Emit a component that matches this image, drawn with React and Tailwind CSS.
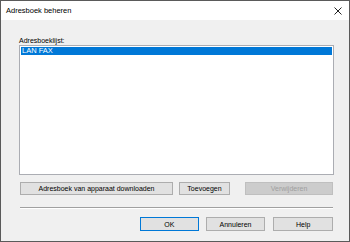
export default function App() {
  const btn =
    "flex items-center justify-center border border-[#adadad] bg-[#e1e1e1] text-black";
  return (
    <div
      className="w-[350px] h-[242px] border border-[#5a5a5a] bg-[#f0f0f0] flex flex-col text-[7px] leading-none"
      style={{ fontFamily: '"Liberation Sans", Arial, sans-serif' }}
    >
      <div className="h-[19px] bg-white flex items-center justify-between pl-[5px] pr-[5px]">
        <span className="text-[7.5px] text-black">Adresboek beheren</span>
        <svg width="8" height="8" viewBox="0 0 8 8" className="mr-[2px]">
          <path d="M0.5 0.5 L7.5 7.5 M7.5 0.5 L0.5 7.5" stroke="#222" strokeWidth="1" fill="none" />
        </svg>
      </div>
      <div className="flex flex-col pl-[18px] pr-[16px]">
        <div className="mt-[16px] h-[8px] flex items-end text-black">Adresboeklijst:</div>
        <div className="mt-[1px] w-[315px] h-[130px] border border-[#abadb3] bg-white p-[1px]">
          <div className="h-[8px] bg-[#0078d7] text-white text-[7.5px] flex items-center pl-[1px]">LAN FAX</div>
        </div>
        <div className="mt-[7px] flex h-[13px]">
          <div className={btn + " ml-[1px] w-[153px]"}>Adresboek van apparaat downloaden</div>
          <div className={btn + " ml-[6px] w-[51px]"}>Toevoegen</div>
          <div className="ml-[15px] w-[88px] flex items-center justify-center border border-[#bfbfbf] bg-[#cccccc] text-[#a0a0a0]">
            Verwijderen
          </div>
        </div>
        <div className="mt-[12px] ml-[1px] w-[313px] h-[2px] border-t border-[#a0a0a0] border-b border-b-white" />
        <div className="mt-[8px] flex h-[14px]">
          <div className={"ml-[121px] w-[60px] flex items-center justify-center border border-[#0078d7] bg-[#e1e1e1] text-black"}>
            OK
          </div>
          <div className={btn + " ml-[7px] w-[61px]"}>Annuleren</div>
          <div className={btn + " ml-[8px] w-[61px]"}>Help</div>
        </div>
      </div>
    </div>
  );
}
